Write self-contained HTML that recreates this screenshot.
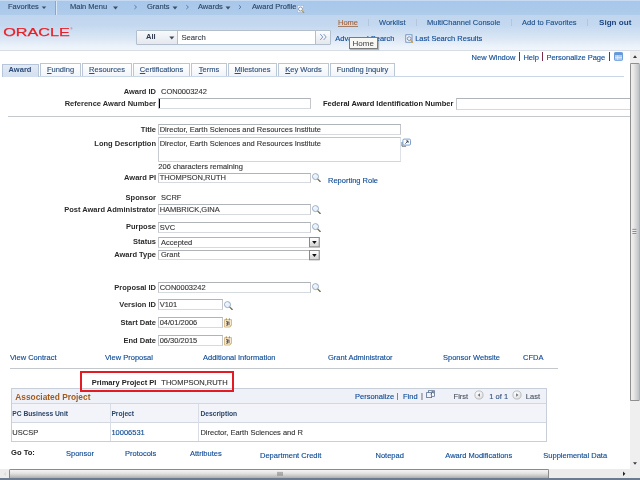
<!DOCTYPE html>
<html lang="en">
<head>
<meta charset="utf-8">
<title>Award Profile</title>
<style>
html,body{margin:0;padding:0;width:640px;height:480px;overflow:hidden;background:#fff}
body{will-change:transform;position:relative;font-family:"Liberation Sans",sans-serif;font-size:7.5px;line-height:10px;color:#000;-webkit-text-stroke:.12px}
.a{position:absolute;white-space:nowrap}
.b{font-weight:bold;-webkit-text-stroke:0}
.l{color:#0d4a94}
.lbl{position:absolute;white-space:nowrap;font-weight:bold;right:484px;text-align:right;color:#2b2b2b;-webkit-text-stroke:0}
.in{position:absolute;box-sizing:border-box;border:1px solid #c3c6cb;border-top-color:#b0b3b8;border-bottom-color:#d6d9dd;background:#fff;height:10.7px;padding-left:.7px;line-height:8.2px;white-space:nowrap;overflow:hidden;color:#363636}
.nav{position:absolute;white-space:nowrap;font-size:7.5px;color:#2c4664;top:2px;line-height:10px}
.hl{position:absolute;white-space:nowrap;color:#1f4f8a;top:17.5px;line-height:10px}
.tab{position:absolute;box-sizing:border-box;top:62.8px;height:13.6px;border:1px solid #bcc7d6;border-bottom:none;background:linear-gradient(#fff,#f1f4f9);color:#2d507d;text-align:center;line-height:12.4px;white-space:nowrap}
.tab u{text-decoration:underline;text-decoration-thickness:.7px;text-underline-offset:.6px}
.hr{position:absolute;height:1px;background:#c4c8cc}
.sep{position:absolute;width:1px;background:#7d2b4b}
svg{position:absolute;overflow:visible}
</style>
</head>
<body>

<!-- ===== top navigation bar ===== -->
<div class="a" style="left:0;top:0;width:640px;height:15.5px;background:linear-gradient(#c6dbf1 0,#c6dbf1 1px,#a9c7ea 1px,#abc9eb 9px,#b0cceb 15px,#b8d1ec 15.5px)"></div>
<div class="a" style="left:55px;top:1px;width:1px;height:14px;background:#84a6d6"></div>
<div class="a" style="left:56px;top:1px;width:1px;height:14px;background:#dbe7f5"></div>
<span class="nav" style="left:8px">Favorites</span>
<span class="nav" style="left:70px">Main Menu</span>
<span class="nav" style="left:147px">Grants</span>
<span class="nav" style="left:198px">Awards</span>
<span class="nav" style="left:252px">Award Profile</span>

<!-- ===== header ===== -->
<div class="a" style="left:0;top:15px;width:640px;height:35px;background:linear-gradient(#c0d6ee 0,#c4d9f0 11px,#dae6f5 23px,#edf3fa 32px,#f2f6fb 35px)"></div>
<div class="a" style="left:0;top:50px;width:640px;height:1px;background:#d6dde6"></div>

<!-- nav dropdown arrows -->
<svg style="left:0;top:0" width="640" height="15">
  <g fill="#3a4f68">
    <path d="M41.7 6.4h4.6l-2.3 2.6z"/>
    <path d="M113 6.5h5l-2.5 3z"/>
    <path d="M172.5 6.5h5l-2.5 3z"/>
    <path d="M225.5 6.5h5l-2.5 3z"/>
  </g>
  <g fill="none" stroke="#4f74a6" stroke-width=".9">
    <path d="M134.4 5.2l2.1 1.9-2.1 1.9"/>
    <path d="M186.3 5.2l2.1 1.9-2.1 1.9"/>
    <path d="M238.9 5.2l2.1 1.9-2.1 1.9"/>
  </g>
  <!-- small magnifier after Award Profile -->
  <g>
    <rect x="297.5" y="5.5" width="6" height="7" fill="#eef4fb" stroke="#9db4cf" stroke-width=".6"/>
    <circle cx="300.5" cy="9" r="2" fill="#f8fbff" stroke="#6f88a6" stroke-width=".8"/>
    <path d="M302 10.6l2 2.2" stroke="#c58a2a" stroke-width="1.1"/>
  </g>
</svg>

<!-- ORACLE logo -->
<svg style="left:0;top:22px" width="80" height="20">
  <text x="3.3" y="14.45" font-family="Liberation Sans, sans-serif" font-size="11.8" fill="#ea1d25" stroke="#ea1d25" stroke-width=".25" textLength="66.4" lengthAdjust="spacingAndGlyphs">ORACLE</text>
  <text x="70.4" y="7.6" font-family="Liberation Sans, sans-serif" font-size="2.6" fill="#e8202a">®</text>
</svg>

<!-- search widget -->
<div class="a" style="left:136px;top:30.2px;width:42px;height:14.4px;box-sizing:border-box;border:1px solid #b4bfcd;background:linear-gradient(#f7f9fb,#e4e9ef);border-radius:1px 0 0 1px"></div>
<span class="a b" style="left:146px;top:32px;color:#2d3b4d">All</span>
<svg style="left:169px;top:35.7px" width="6" height="4"><path d="M.3 .5h5l-2.5 3z" fill="#3b4656"/></svg>
<div class="a" style="left:177px;top:30.2px;width:139px;height:14.4px;box-sizing:border-box;border:1px solid #b4bfcd;background:#fff"></div>
<span class="a" style="left:181.4px;top:32.6px;color:#3d4551;font-size:7.7px">Search</span>
<div class="a" style="left:315px;top:30.2px;width:16px;height:14.4px;box-sizing:border-box;border:1px solid #b4bfcd;background:linear-gradient(#fbfcfd,#e3e8ee);border-radius:0 1px 1px 0"></div>
<svg style="left:319.2px;top:32.7px" width="10" height="8"><path d="M1.2 1l2.6 3-2.6 3M4.6 1l2.6 3-2.6 3" fill="none" stroke="#7794c2" stroke-width=".9"/></svg>

<!-- header links -->
<span class="hl" style="left:338px;color:#aa6236;text-decoration:underline;text-decoration-thickness:.7px;text-decoration-color:#a0806a">Home</span>
<div class="a" style="left:368px;top:19px;width:1px;height:7px;background:#b3c6dc"></div>
<span class="hl" style="left:379px">Worklist</span>
<div class="a" style="left:416px;top:19px;width:1px;height:7px;background:#b3c6dc"></div>
<span class="hl" style="left:427px">MultiChannel Console</span>
<div class="a" style="left:511px;top:19px;width:1px;height:7px;background:#b3c6dc"></div>
<span class="hl" style="left:522px">Add to Favorites</span>
<div class="a" style="left:587px;top:19px;width:1px;height:7px;background:#b3c6dc"></div>
<span class="hl b" style="left:599px;font-size:8.1px;color:#1c4581">Sign out</span>

<span class="a l" style="left:335.3px;top:34px">Advanced Search</span>
<svg style="left:404.7px;top:34px" width="10" height="10">
  <rect x=".8" y=".8" width="6.2" height="7.4" fill="#fafcff" stroke="#5d7fb0" stroke-width=".8"/>
  <circle cx="4.2" cy="4.6" r="1.9" fill="#e9f1fb" stroke="#5a79a6" stroke-width=".8"/>
  <path d="M5.6 6.2l2.4 2.5" stroke="#d39a2c" stroke-width="1.2"/>
</svg>
<span class="a l" style="left:415.2px;top:34px">Last Search Results</span>

<!-- tooltip -->
<div class="a" style="left:349px;top:37.3px;width:28.6px;height:12.2px;box-sizing:border-box;border:1px solid #7b7b7b;background:#f7f7f4;box-shadow:1px 1px 1px rgba(0,0,0,.25)"></div>
<span class="a" style="left:352.5px;top:38.6px;color:#3c3c3c;font-size:8px;-webkit-text-stroke:0">Home</span>

<!-- ===== page bar ===== -->
<span class="a l" style="left:471.6px;top:52.5px">New Window</span>
<div class="sep" style="left:519px;top:52px;height:9px"></div>
<span class="a l" style="left:523.4px;top:52.5px">Help</span>
<div class="sep" style="left:542px;top:52px;height:9px"></div>
<span class="a l" style="left:546.4px;top:52.5px">Personalize Page</span>
<div class="sep" style="left:609px;top:52px;height:9px"></div>
<svg style="left:614.3px;top:52px" width="10" height="9">
  <rect x=".5" y=".5" width="8" height="7.8" rx=".6" fill="#b4cdef" stroke="#6a9cdc" stroke-width="1"/>
  <rect x="1" y="1" width="7" height="2" fill="#6398dc"/>
  <path d="M3.6 3.4v4.6M1 5.6h7" stroke="#e8f0fb" stroke-width=".7"/>
</svg>

<!-- ===== tabs ===== -->
<div class="hr" style="left:2px;top:76.2px;width:622px;background:#c8d6e8"></div>
<div class="tab b" style="left:2px;width:36.8px;top:63.8px;height:12.9px;line-height:10.6px;padding-right:.8px;background:linear-gradient(#e2eaf5,#d3dff0);border-color:#b6c5d9;color:#2b4b78">Award</div>
<div class="tab" style="left:40px;width:41px"><u>F</u>unding</div>
<div class="tab" style="left:82px;width:50px"><u>R</u>esources</div>
<div class="tab" style="left:133px;width:57px"><u>C</u>ertifications</div>
<div class="tab" style="left:191px;width:36px"><u>T</u>erms</div>
<div class="tab" style="left:228px;width:49px"><u>M</u>ilestones</div>
<div class="tab" style="left:278px;width:51px"><u>K</u>ey Words</div>
<div class="tab" style="left:330px;width:65px">Funding <u>I</u>nquiry</div>

<!-- ===== form ===== -->
<span class="lbl" style="top:87px">Award ID</span>
<span class="a" style="left:161px;top:87px;color:#363636">CON0003242</span>
<span class="lbl" style="top:99px">Reference Award Number</span>
<div class="in" style="left:158px;top:98px;width:153px;height:11.3px"></div>
<div class="a" style="left:159px;top:99px;width:1px;height:9px;background:#000"></div>
<span class="a b" style="left:323px;top:99px;color:#222">Federal Award Identification Number</span>
<div class="in" style="left:456px;top:98px;width:174px;height:11.5px;border-right:none"></div>
<div class="hr" style="left:8px;top:115.7px;width:621.5px"></div>

<span class="lbl" style="top:124.5px">Title</span>
<div class="in" style="left:158px;top:124px;width:243px;padding-top:1px">Director, Earth Sciences and Resources Institute</div>
<span class="lbl" style="top:139px">Long Description</span>
<div class="in" style="left:158px;top:137.1px;width:243px;height:25px;padding-top:2.2px;border-color:#c2c5ca #dde1e8 #d3d6db #c8ccd2">Director, Earth Sciences and Resources Institute</div>
<svg style="left:400.5px;top:137.5px" width="12" height="10">
  <path d="M1 4v4.2h4.1" fill="none" stroke="#5d6269" stroke-width=".9"/>
  <rect x="1.9" y="1.1" width="7.6" height="6" rx="1.1" fill="#fff" stroke="#759bd0" stroke-width=".95"/>
  <path d="M4.4 5.6l2.6-2.6M5.1 2.9h2v2" fill="none" stroke="#2f3a4d" stroke-width=".85"/>
</svg>
<span class="a" style="left:158.3px;top:161.5px;color:#363636">206 characters remaining</span>

<span class="lbl" style="top:172.5px">Award PI</span>
<div class="in" style="left:158px;top:172.6px;width:153px">THOMPSON,RUTH</div>
<span class="a l" style="left:328px;top:176px">Reporting Role</span>

<span class="lbl" style="top:193px">Sponsor</span>
<span class="a" style="left:161px;top:193px;color:#363636">SCRF</span>
<span class="lbl" style="top:205px">Post Award Administrator</span>
<div class="in" style="left:158px;top:204.4px;width:153px;height:10.9px;padding-top:.6px">HAMBRICK,GINA</div>
<span class="lbl" style="top:222px">Purpose</span>
<div class="in" style="left:158px;top:222.3px;width:153px;padding-top:.5px">SVC</div>
<span class="lbl" style="top:237px">Status</span>
<div class="in" style="left:158px;top:237px;width:162.4px;height:10.9px;padding-left:2px;line-height:8.8px;padding-top:.6px">Accepted</div>
<span class="lbl" style="top:249.5px">Award Type</span>
<div class="in" style="left:158px;top:249.6px;width:162.4px;height:10.5px;padding-left:2px;line-height:8.8px;padding-top:.4px">Grant</div>

<span class="lbl" style="top:282.7px">Proposal ID</span>
<div class="in" style="left:158px;top:282.2px;width:153px;padding-top:.8px">CON0003242</div>
<span class="lbl" style="top:300px">Version ID</span>
<div class="in" style="left:158px;top:299.3px;width:64.5px;padding-top:1.1px">V101</div>
<span class="lbl" style="top:317.6px">Start Date</span>
<div class="in" style="left:158px;top:317px;width:64.5px;padding-top:.7px">04/01/2006</div>
<span class="lbl" style="top:335.5px">End Date</span>
<div class="in" style="left:158px;top:334.7px;width:64.5px;height:11px;padding-top:.9px">06/30/2015</div>

<!-- links row -->
<span class="a l" style="left:10px;top:353px">View Contract</span>
<span class="a l" style="left:105px;top:353px">View Proposal</span>
<span class="a l" style="left:203px;top:353px">Additional Information</span>
<span class="a l" style="left:328px;top:353px">Grant Administrator</span>
<span class="a l" style="left:443px;top:353px">Sponsor Website</span>
<span class="a l" style="left:523px;top:353px">CFDA</span>
<div class="hr" style="left:10px;top:368px;width:548px"></div>

<!-- icon definitions (shapes only) -->
<svg width="0" height="0" style="left:0;top:0">
  <defs>
    <g id="mag">
      <path d="M5.6 5.8l2.6 2.7" stroke="#5f5a38" stroke-width="1.15" stroke-linecap="round"/>
      <path d="M6.1 6.1l1.8 1.9" stroke="#b99a4a" stroke-width=".45" stroke-linecap="round"/>
      <circle cx="3.5" cy="3.6" r="3" fill="#e9f1fb" stroke="#8d9fb8" stroke-width=".85"/>
      <path d="M1.7 3.4a1.9 1.9 0 0 1 1.7-1.7" stroke="#fff" stroke-width=".8" fill="none"/>
    </g>
    <g id="cal">
      <path d="M.5 1.6h7v5.6l-1.6 1.9h-5.4z" fill="#f6ead0" stroke="#cbae78" stroke-width=".8"/>
      <path d="M5.9 9.1v-1.9h1.6z" fill="#d9b36a"/>
      <path d="M2.3 .3v2M5.4 .3v2" stroke="#b48a45" stroke-width="1"/>
      <path d="M2.1 3.6h1.5v3.6h-1.5M2.3 5.3h1.3M5 3.6v3.6M4.4 4.2l.6-.6" fill="none" stroke="#3a3530" stroke-width=".8"/>
    </g>
    <g id="dd">
      <rect x=".5" y=".5" width="9.7" height="9.3" fill="url(#ddg)" stroke="#8a8a8a" stroke-width="1"/>
      <path d="M3.1 4h4.6l-2.3 2.9z" fill="#111"/>
    </g>
    <radialGradient id="cg" cx=".4" cy=".35" r=".7"><stop offset="0" stop-color="#fff"/><stop offset=".6" stop-color="#ececec"/><stop offset="1" stop-color="#d4d4d4"/></radialGradient>
    <linearGradient id="ddg" x1="0" y1="0" x2="0" y2="1"><stop offset="0" stop-color="#fff"/><stop offset=".45" stop-color="#f4f4f4"/><stop offset=".55" stop-color="#e2e2e2"/><stop offset="1" stop-color="#d6d6d6"/></linearGradient>
  </defs>
</svg>
<svg style="left:311.6px;top:173.4px" width="10" height="10"><use href="#mag"/></svg>
<svg style="left:311.6px;top:205.4px" width="10" height="10"><use href="#mag"/></svg>
<svg style="left:311.6px;top:222.8px" width="10" height="10"><use href="#mag"/></svg>
<svg style="left:311.6px;top:283px" width="10" height="10"><use href="#mag"/></svg>
<svg style="left:224.3px;top:300.8px" width="10" height="10"><use href="#mag"/></svg>
<svg style="left:224.1px;top:317.8px" width="10" height="10"><use href="#cal"/></svg>
<svg style="left:224.1px;top:335.7px" width="10" height="10"><use href="#cal"/></svg>
<svg style="left:309.3px;top:237.3px" width="11" height="11"><use href="#dd"/></svg>
<svg style="left:309.3px;top:249.9px" width="11" height="11"><use href="#dd"/></svg>

<!-- ===== highlighted Primary Project PI ===== -->
<span class="a b" style="left:91.7px;top:378.3px;color:#222">Primary Project PI</span>
<span class="a" style="left:161.3px;top:378.3px;color:#363636">THOMPSON,RUTH</span>

<!-- ===== Associated Project grid ===== -->
<div class="a" style="left:10.8px;top:388px;width:536.2px;height:53.5px;box-sizing:border-box;border:1px solid #c9cfd9;background:#fff"></div>
<div class="a" style="left:11.8px;top:389px;width:534.2px;height:14.5px;background:#eff1f8"></div>
<div class="a" style="left:11.8px;top:403.4px;width:534.2px;height:1px;background:#d2d7e0"></div>
<div class="a" style="left:11.8px;top:404.4px;width:534.2px;height:17.8px;background:#f2f4f9"></div>
<div class="a" style="left:11.8px;top:422px;width:534.2px;height:1px;background:#d2d7e0"></div>
<div class="a" style="left:110px;top:404.4px;width:1px;height:36.6px;background:#d9dde5"></div>
<div class="a" style="left:198.3px;top:404.4px;width:1px;height:36.6px;background:#d9dde5"></div>
<span class="a b" style="left:15.3px;top:391.5px;font-size:8.35px;color:#a25a1c">Associated Project</span>
<span class="a l" style="left:355px;top:391.5px">Personalize</span>
<span class="a" style="left:396.6px;top:391.3px;color:#555">|</span>
<span class="a l" style="left:403px;top:391.5px">Find</span>
<span class="a" style="left:421px;top:391.3px;color:#555">|</span>
<svg style="left:426px;top:390px" width="10" height="9">
  <rect x="2.5" y=".7" width="6" height="5.6" fill="#fff" stroke="#5a6f8e" stroke-width=".8"/>
  <rect x=".6" y="2.6" width="5" height="5" fill="#eef2f8" stroke="#5a6f8e" stroke-width=".8"/>
  <path d="M4.6 4.2l2.6-2.4M5.6 1.6h1.8v1.8" fill="none" stroke="#31486a" stroke-width=".7"/>
</svg>
<span class="a" style="left:453.6px;top:391.6px;color:#4a5563">First</span>
<svg style="left:474.2px;top:389.8px" width="10" height="10"><circle cx="5" cy="5" r="4.1" fill="url(#cg)" stroke="#b3b6bb" stroke-width=".8"/><path d="M6 3.2v3.6L3.6 5z" fill="#6e737a"/></svg>
<span class="a" style="left:489.3px;top:391.6px;color:#31527e">1 of 1</span>
<svg style="left:512.4px;top:389.8px" width="10" height="10"><circle cx="5" cy="5" r="4.1" fill="url(#cg)" stroke="#b3b6bb" stroke-width=".8"/><path d="M4.1 3.2v3.6L6.5 5z" fill="#6e737a"/></svg>
<span class="a" style="left:525.8px;top:391.6px;color:#4a5563">Last</span>

<span class="a b" style="left:12.3px;top:409px;font-size:6.7px;color:#2a4568">PC Business Unit</span>
<span class="a b" style="left:111.4px;top:409px;font-size:6.7px;color:#2a4568">Project</span>
<span class="a b" style="left:200.4px;top:409px;font-size:6.7px;color:#2a4568">Description</span>
<span class="a" style="left:12.3px;top:428px;color:#363636">USCSP</span>
<span class="a l" style="left:111.4px;top:428px">10006531</span>
<span class="a" style="left:200.4px;top:428px;color:#363636">Director, Earth Sciences and R</span>

<!-- red highlight rectangle (drawn over grid top edge) -->
<div class="a" style="left:79.6px;top:371px;width:154.2px;height:21px;box-sizing:border-box;border:2.4px solid #e31b23"></div>

<!-- ===== Go To row ===== -->
<span class="a b" style="left:11px;top:447.7px;color:#222;font-size:7.6px">Go To:</span>
<span class="a l" style="left:66px;top:449px">Sponsor</span>
<span class="a l" style="left:125px;top:449px">Protocols</span>
<span class="a l" style="left:190px;top:449px">Attributes</span>
<span class="a l" style="left:260px;top:451px">Department Credit</span>
<span class="a l" style="left:375.5px;top:451px">Notepad</span>
<span class="a l" style="left:445.3px;top:451px">Award Modifications</span>
<span class="a l" style="left:543.3px;top:451px">Supplemental Data</span>

<!-- ===== vertical scrollbar ===== -->
<div class="a" style="left:630px;top:51px;width:10px;height:418px;background:#efefef"></div>
<div class="a" style="left:629.8px;top:62.5px;width:9.9px;height:338px;box-sizing:border-box;border:1px solid #8f8f8f;border-right-color:#aeb2b6;border-radius:1.5px;background:linear-gradient(90deg,#efefef,#e9e9e9 30%,#d4d5d7 65%,#bfc2c6)"></div>
<svg style="left:630px;top:51px" width="10" height="418">
  <path d="M3 6.9l2-2.6 2 2.6z" fill="#3c3c3c"/>
  <path d="M2.4 178.4h4M2.4 180.5h4M2.4 182.6h4" stroke="#666" stroke-width=".8"/>
  <path d="M2.4 179.2h4M2.4 181.3h4M2.4 183.4h4" stroke="#f4f4f4" stroke-width=".6"/>
  <path d="M3 411.2l2 2.6 2-2.6z" fill="#3c3c3c"/>
</svg>

<!-- ===== horizontal scrollbar ===== -->
<div class="a" style="left:0;top:469px;width:640px;height:10px;background:#ececec"></div>
<div class="a" style="left:9.4px;top:469.4px;width:539.6px;height:9.2px;box-sizing:border-box;border:1px solid #8a8a8a;border-bottom-color:#9a9a9a;border-radius:1.5px;background:linear-gradient(#f5f5f5,#e4e4e4 40%,#c6c6c6 75%,#adadad)"></div>
<svg style="left:0;top:469px" width="640" height="10">
  <path d="M278 2.9v3.9M280 2.9v3.9M282 2.9v3.9" stroke="#5a5a5a" stroke-width=".8"/>
  <path d="M6 3L3.6 5l2.4 2z" fill="#dcdcdc"/>
  <path d="M623 2.6l2.4 2.2-2.4 2.2z" fill="#222"/>
</svg>
<div class="a" style="left:0;top:478.3px;width:640px;height:1.7px;background:#6d7b91"></div>

</body>
</html>
